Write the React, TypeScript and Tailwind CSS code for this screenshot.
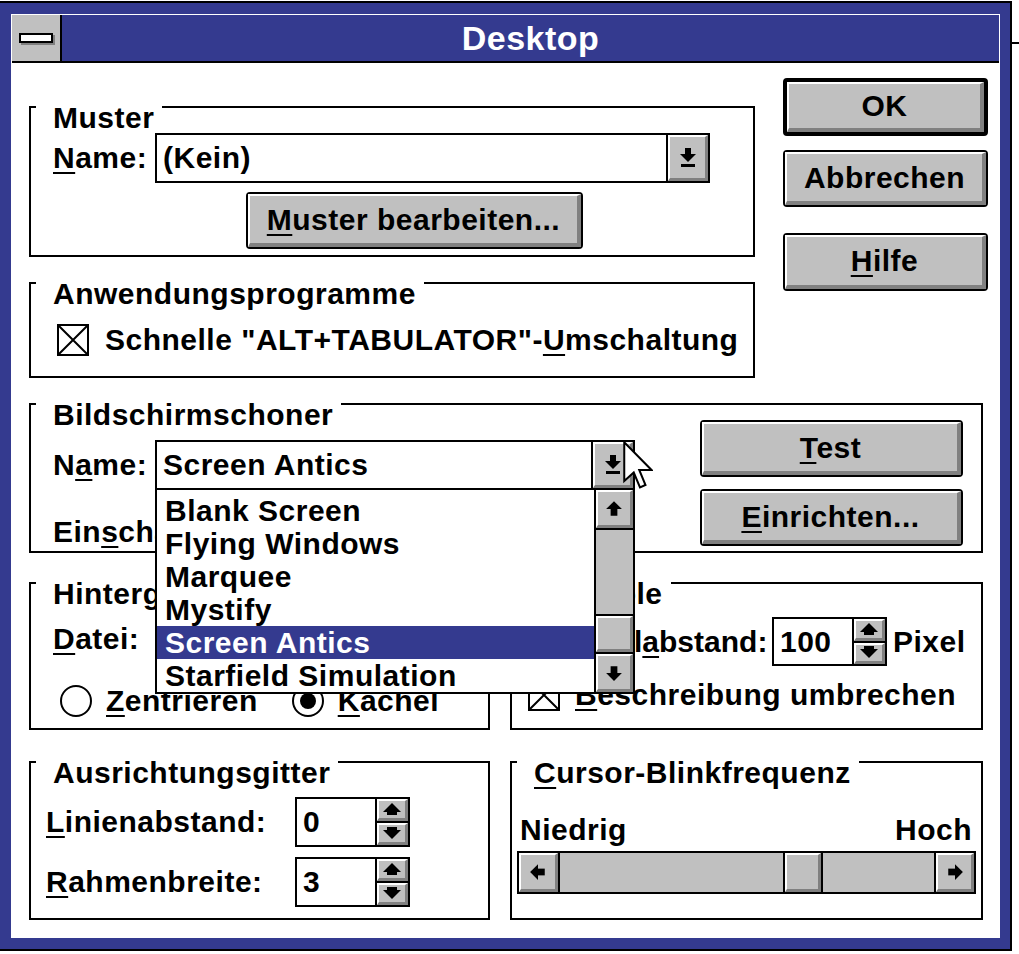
import type { ReactNode } from "react";

// Win 3.1 raised face used by scroll/combo/spin buttons
const face =
  "bg-[#c0c0c0] border-t-2 border-l-2 border-t-white border-l-white border-b-[3px] border-r-[3px] border-b-[#808080] border-r-[#808080]";

const btnFace =
  "bg-[#c0c0c0] border-t-2 border-l-2 border-t-white border-l-white border-b-4 border-r-4 border-b-[#808080] border-r-[#808080]";

function U({ children }: { children: ReactNode }) {
  return (
    <span className="underline decoration-2 underline-offset-[4px]">
      {children}
    </span>
  );
}

function Button({
  children,
  className = "",
  isDefault = false,
}: {
  children: ReactNode;
  className?: string;
  isDefault?: boolean;
}) {
  return (
    <div
      className={`rounded-[4px] border-black ${isDefault ? "border-4" : "border-2"} ${className}`}
    >
      <div className={`h-full flex items-center justify-center ${btnFace}`}>
        {children}
      </div>
    </div>
  );
}

function ComboArrow() {
  return (
    <svg width="16" height="19" viewBox="0 0 16 19">
      <rect x="5" y="0" width="6" height="6" />
      <polygon points="0,6 16,6 8,14" />
      <rect x="1" y="16" width="14" height="3" />
    </svg>
  );
}

function ScrollArrow({ className = "" }: { className?: string }) {
  return (
    <svg width="18" height="18" viewBox="0 0 16 16" className={className}>
      <polygon points="8,1 15,8 1,8" />
      <rect x="5" y="8" width="6" height="6" />
    </svg>
  );
}

function Combo({ text, className = "" }: { text?: ReactNode; className?: string }) {
  return (
    <div className={`flex border-2 border-black bg-white ${className}`}>
      <div className="flex-1 flex items-center pl-[6px] whitespace-nowrap">
        {text}
      </div>
      <div className="w-[42px] border-l-2 border-black">
        <div className={`h-full flex items-center justify-center ${face}`}>
          <ComboArrow />
        </div>
      </div>
    </div>
  );
}

function Spin({ value, className = "" }: { value: string; className?: string }) {
  return (
    <div className={`flex w-[115px] border-2 border-black bg-white ${className}`}>
      <div className="w-[80px] border-r-2 border-black flex items-center pl-[6px]">
        {value}
      </div>
      <div className="flex-1 flex flex-col">
        <div className={`flex-1 flex items-center justify-center ${face}`}>
          <svg width="18" height="13" viewBox="0 0 18 13">
            <polygon points="9,0 18,9 0,9" />
            <rect x="4" y="9" width="10" height="3" />
          </svg>
        </div>
        <div className="h-[2px] bg-black" />
        <div className={`flex-1 flex items-center justify-center ${face}`}>
          <svg width="18" height="13" viewBox="0 0 18 13">
            <rect x="4" y="0" width="10" height="3" />
            <polygon points="0,3 18,3 9,12" />
          </svg>
        </div>
      </div>
    </div>
  );
}

function CheckBox() {
  return (
    <div className="w-[32px] h-[32px] border-2 border-black bg-white shrink-0">
      <svg viewBox="0 0 28 28" className="w-full h-full">
        <path d="M0 0L28 28M28 0L0 28" stroke="black" strokeWidth="2" />
      </svg>
    </div>
  );
}

function Radio({ on = false }: { on?: boolean }) {
  return (
    <div className="w-[32px] h-[32px] rounded-full border-2 border-black bg-white flex items-center justify-center shrink-0">
      {on && <div className="w-[16px] h-[16px] rounded-full bg-black" />}
    </div>
  );
}

function Group({
  title,
  className = "",
  children,
}: {
  title: ReactNode;
  className?: string;
  children?: ReactNode;
}) {
  return (
    <div className={`relative border-2 border-black ${className}`}>
      <div className="absolute left-[5px] -top-[5px] bg-white pl-[17px] pr-[8px] whitespace-nowrap">
        {title}
      </div>
      {children}
    </div>
  );
}

const savers = [
  "Blank Screen",
  "Flying Windows",
  "Marquee",
  "Mystify",
  "Screen Antics",
  "Starfield Simulation",
];

function SaverList() {
  return (
    <div className="absolute left-0 top-[48px] z-10 w-[480px] h-[206px] flex border-2 border-black bg-white">
      <div className="flex-1 pt-[4px]">
        {savers.map((s) => (
          <div
            key={s}
            className={`h-[33px] leading-[33px] pl-[8px] whitespace-nowrap ${
              s === "Screen Antics" ? "bg-[#343a8f] text-white" : ""
            }`}
          >
            {s}
          </div>
        ))}
      </div>
      <div className="w-[39px] border-l-2 border-black flex flex-col">
        <div className="h-[40px] border-b-2 border-black">
          <div className={`h-full flex items-center justify-center ${face}`}>
            <ScrollArrow />
          </div>
        </div>
        <div className="flex-1 bg-[#c0c0c0]" />
        <div className="h-[40px] border-y-2 border-black">
          <div className={`h-full ${face}`} />
        </div>
        <div className={`h-[38px] flex items-center justify-center ${face}`}>
          <ScrollArrow className="rotate-180" />
        </div>
      </div>
    </div>
  );
}

function MouseCursor() {
  return (
    <svg
      width="30"
      height="50"
      viewBox="0 0 12 20"
      className="absolute left-[468px] top-[1px] z-20"
    >
      <polygon
        points="0.5,0.5 0.5,16 4.3,12.6 6.8,18.6 9,17.6 6.5,11.6 11.4,11.6"
        fill="white"
        stroke="black"
        strokeWidth="0.8"
      />
    </svg>
  );
}

export default function App() {
  return (
    <div className="relative w-[1019px] h-[954px] bg-white text-black font-['Liberation_Sans',Arial,sans-serif] font-bold text-[30px] leading-[30px] tracking-[0.5px]">
      <div className="absolute left-[1012px] top-[41px] w-[7px] h-[2px] bg-black" />
      <div className="mt-[1px] w-[1012px] h-[950px] border-t-2 border-r-2 border-b-2 border-black bg-[#343a8f] pl-[11px] pt-[11px] pr-[10px] pb-[11px]">
        <div className="h-full flex flex-col border border-b-0 border-white">
          {/* Title bar */}
          <div className="h-[48px] shrink-0 flex border-b-2 border-black">
            <div className="w-[50px] border-r-2 border-black bg-[#c0c0c0] flex items-center justify-center">
              <div className="w-[34px] h-[10px] border-2 border-black bg-white shadow-[2px_2px_0_#808080]" />
            </div>
            <div className="flex-1 flex items-center justify-center text-white text-[34px] leading-[34px]">
              Desktop
            </div>
          </div>

          {/* Client area */}
          <div className="flex-1 bg-white pl-[17px]">
            {/* Muster / Anwendungsprogramme + buttons */}
            <div className="flex">
              <div className="w-[726px] flex flex-col">
                <Group title="Muster" className="mt-[43px] h-[151px]">
                  <div className="flex items-center pl-[22px] mt-[25px]">
                    <span className="w-[102px]">
                      <U>N</U>ame:
                    </span>
                    <Combo text="(Kein)" className="w-[555px] h-[50px]" />
                  </div>
                  <Button className="ml-[215px] mt-[9px] w-[337px] h-[57px]">
                    <span>
                      <U>M</U>uster bearbeiten...
                    </span>
                  </Button>
                </Group>
                <Group title="Anwendungsprogramme" className="mt-[25px] h-[96px]">
                  <div className="flex items-center pl-[26px] mt-[40px] gap-[16px]">
                    <CheckBox />
                    <span className="whitespace-nowrap">
                      Schnelle "ALT+TABULATOR"-<U>U</U>mschaltung
                    </span>
                  </div>
                </Group>
              </div>
              <div className="ml-[28px] w-[205px] flex flex-col pt-[15px]">
                <Button isDefault className="h-[58px]">
                  OK
                </Button>
                <Button className="mt-[14px] h-[57px]">Abbrechen</Button>
                <Button className="mt-[26px] h-[58px]">
                  <span>
                    <U>H</U>ilfe
                  </span>
                </Button>
              </div>
            </div>

            {/* Bildschirmschoner */}
            <Group title="Bildschirmschoner" className="mt-[25px] w-[954px] h-[150px]">
              <div className="flex">
                <div className="flex flex-col pl-[22px]">
                  <div className="flex items-center mt-[35px]">
                    <span className="w-[102px]">
                      N<U>a</U>me:
                    </span>
                    <div className="relative">
                      <Combo text="Screen Antics" className="w-[480px] h-[50px]" />
                      <SaverList />
                      <MouseCursor />
                    </div>
                  </div>
                  <div className="mt-[27px] whitespace-nowrap">
                    Ein<U>s</U>chaltzeit:
                  </div>
                </div>
                <div className="ml-[65px] mt-[15px] flex flex-col gap-[12px]">
                  <Button className="w-[263px] h-[57px]">
                    <span>
                      <U>T</U>est
                    </span>
                  </Button>
                  <Button className="w-[263px] h-[57px]">
                    <span>
                      <U>E</U>inrichten...
                    </span>
                  </Button>
                </div>
              </div>
            </Group>

            {/* Hintergrundbild / Symbole */}
            <div className="flex gap-[20px] mt-[29px]">
              <Group title="Hintergrundbild" className="w-[461px] h-[148px]">
                <div className="flex items-center pl-[22px] mt-[30px]">
                  <span className="w-[102px]">
                    <U>D</U>atei:
                  </span>
                  <Combo className="w-[315px] h-[50px]" />
                </div>
                <div className="flex items-center pl-[29px] mt-[21px]">
                  <Radio />
                  <span className="ml-[14px]">
                    <U>Z</U>entrieren
                  </span>
                  <div className="ml-[34px]">
                    <Radio on />
                  </div>
                  <span className="ml-[14px]">
                    <U>K</U>achel
                  </span>
                </div>
              </Group>
              <Group title="Symbole" className="w-[473px] h-[148px]">
                <div className="flex items-center pl-[22px] mt-[33px]">
                  <span className="w-[238px] whitespace-nowrap tracking-normal">
                    Symbol<U>a</U>bstand:
                  </span>
                  <Spin value="100" className="h-[49px]" />
                  <span className="ml-[6px]">Pixel</span>
                </div>
                <div className="flex items-center pl-[16px] mt-[13px] gap-[15px]">
                  <CheckBox />
                  <span className="whitespace-nowrap">
                    <U>B</U>eschreibung umbrechen
                  </span>
                </div>
              </Group>
            </div>

            {/* Ausrichtungsgitter / Cursor-Blinkfrequenz */}
            <div className="flex gap-[20px] mt-[31px]">
              <Group title="Ausrichtungsgitter" className="w-[461px] h-[159px]">
                <div className="flex items-center pl-[15px] mt-[34px]">
                  <span className="w-[249px]">
                    <U>L</U>inienabstand:
                  </span>
                  <Spin value="0" className="h-[50px]" />
                </div>
                <div className="flex items-center pl-[15px] mt-[10px]">
                  <span className="w-[249px]">
                    <U>R</U>ahmenbreite:
                  </span>
                  <Spin value="3" className="h-[50px]" />
                </div>
              </Group>
              <Group
                title={
                  <span>
                    <U>C</U>ursor-Blinkfrequenz
                  </span>
                }
                className="w-[473px] h-[159px]"
              >
                <div className="flex justify-between pl-[8px] pr-[9px] mt-[52px]">
                  <span>Niedrig</span>
                  <span>Hoch</span>
                </div>
                <div className="mx-[5px] mt-[6px] h-[43px] flex border-2 border-black">
                  <div className="w-[41px] border-r-2 border-black">
                    <div className={`h-full flex items-center justify-center ${face}`}>
                      <ScrollArrow className="-rotate-90" />
                    </div>
                  </div>
                  <div className="w-[223px] bg-[#c0c0c0]" />
                  <div className="w-[40px] border-x-2 border-black">
                    <div className={`h-full ${face}`} />
                  </div>
                  <div className="flex-1 bg-[#c0c0c0]" />
                  <div className="w-[40px] border-l-2 border-black">
                    <div className={`h-full flex items-center justify-center ${face}`}>
                      <ScrollArrow className="rotate-90" />
                    </div>
                  </div>
                </div>
              </Group>
            </div>
          </div>
        </div>
      </div>
    </div>
  );
}
